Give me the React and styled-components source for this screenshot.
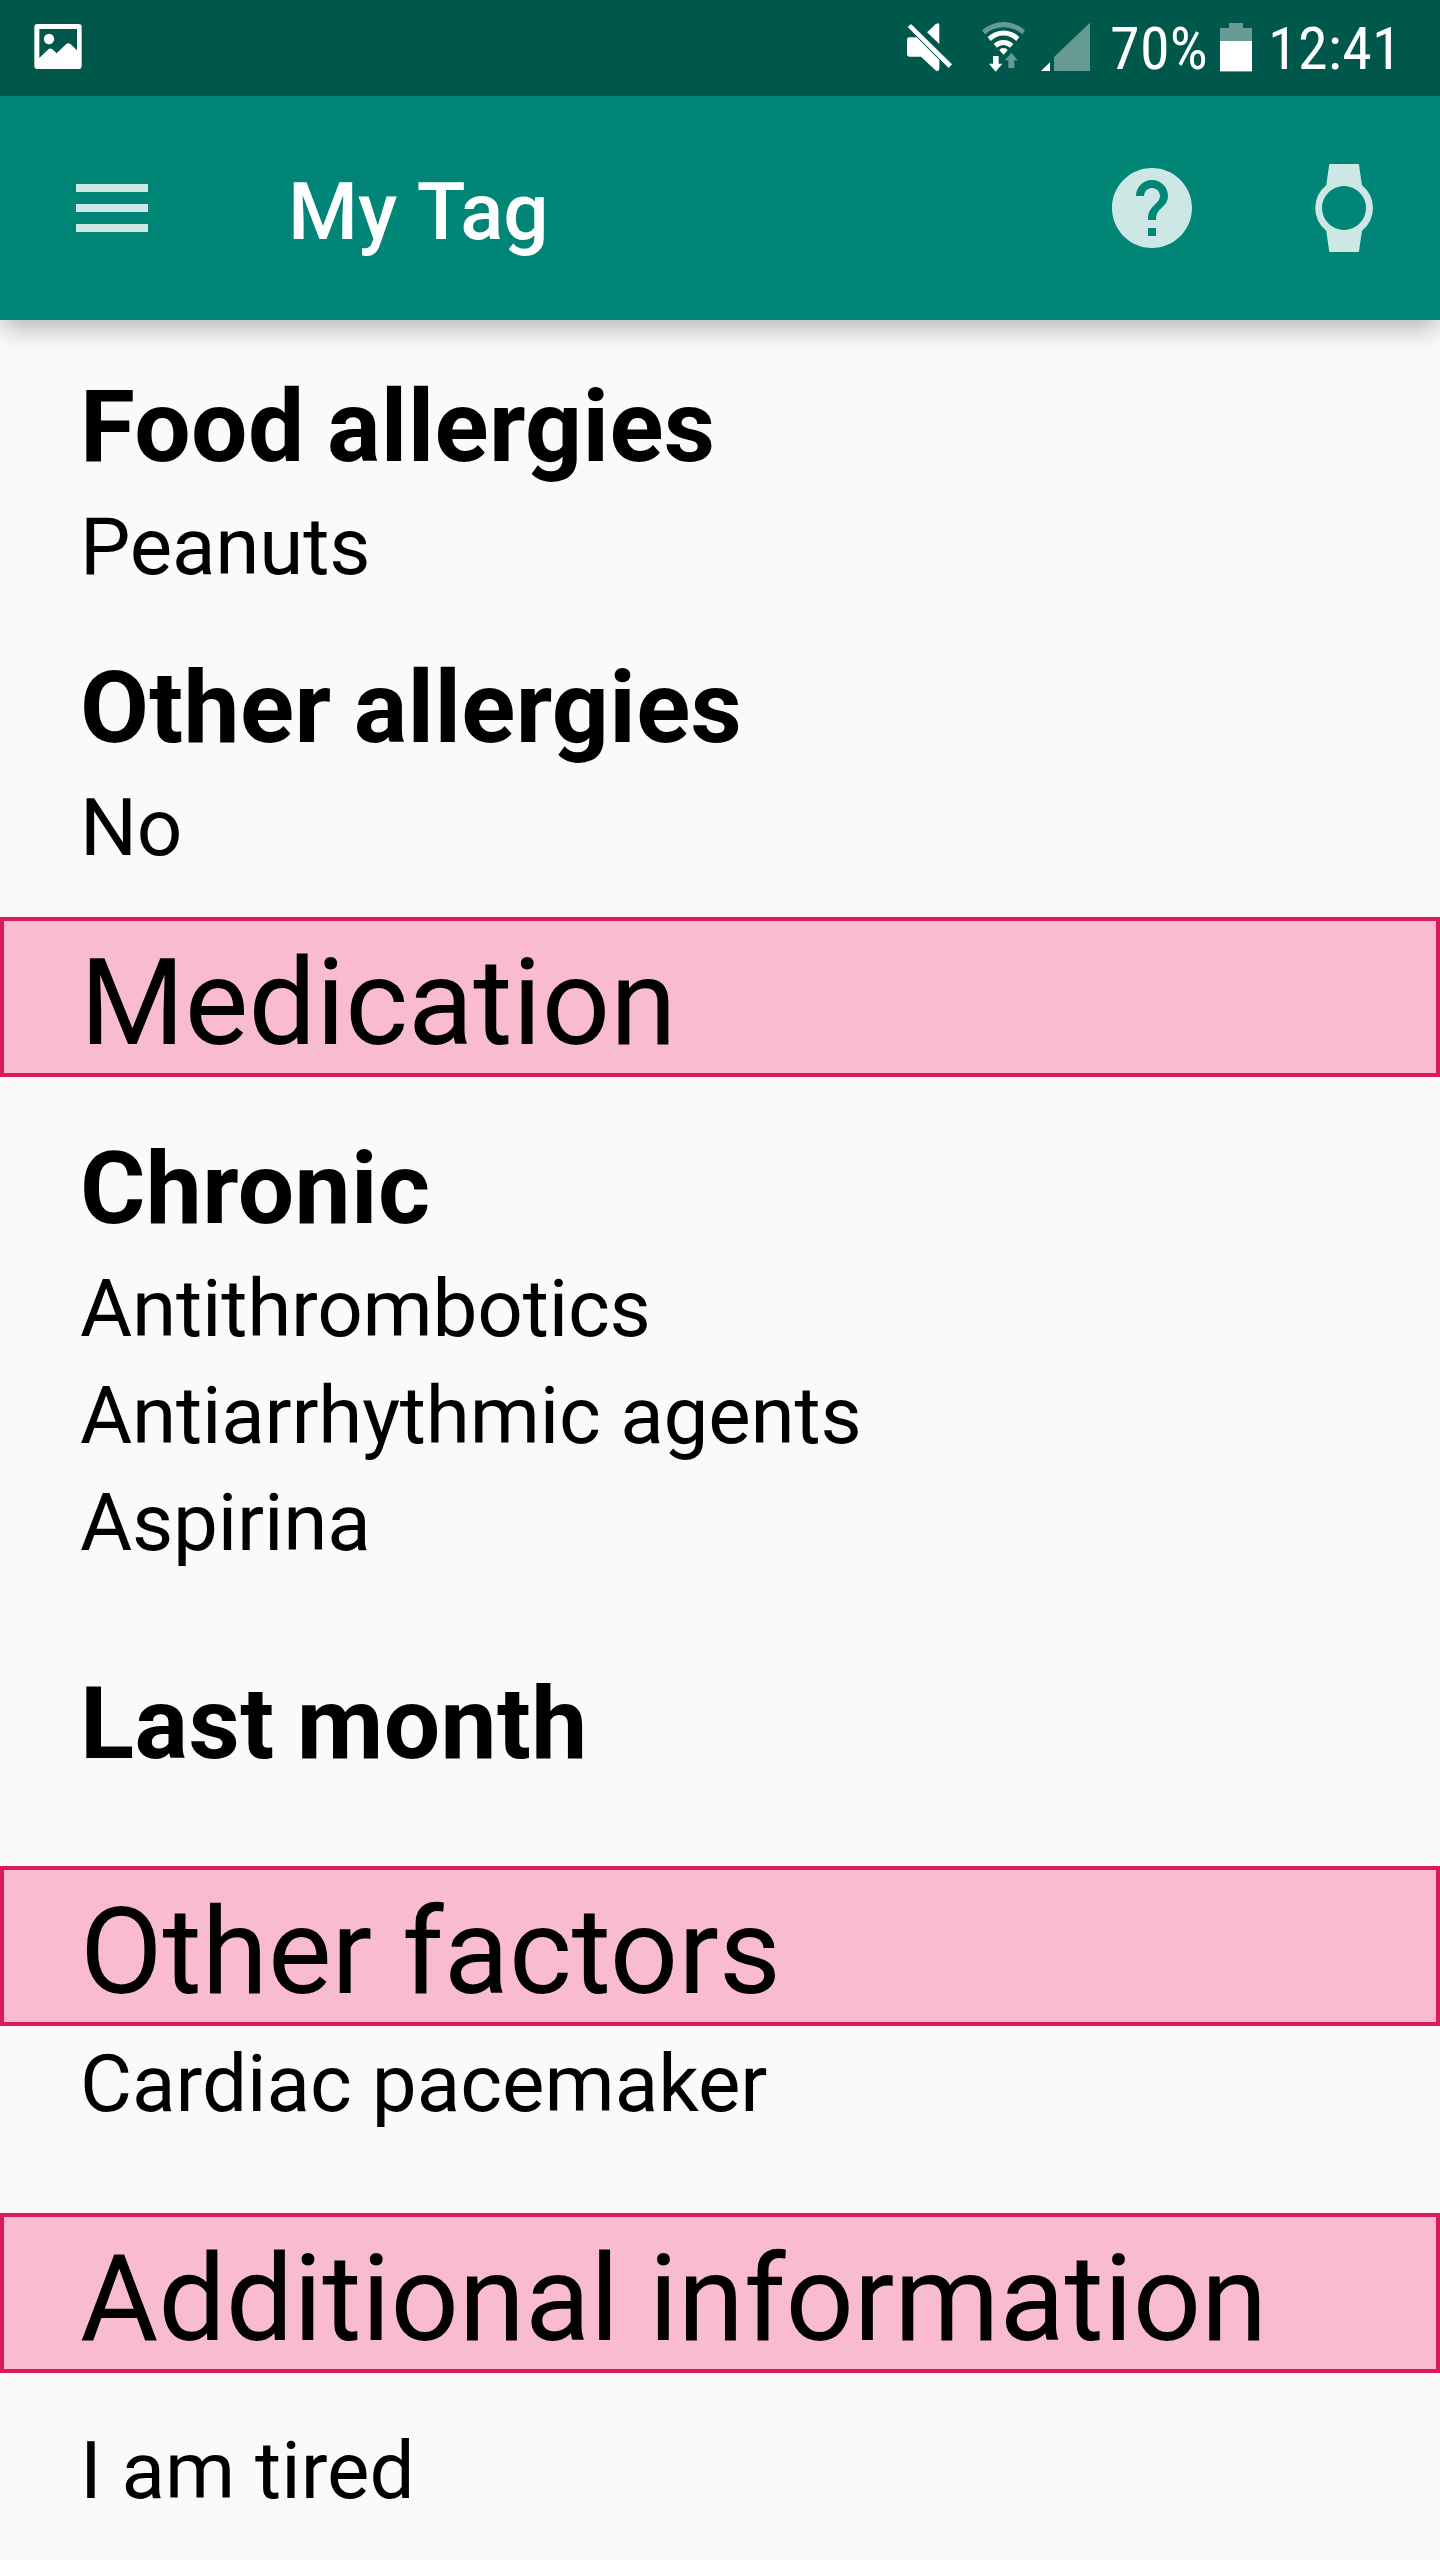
import React from "react";
import styled, { createGlobalStyle } from "styled-components";

const GlobalStyle = createGlobalStyle`
  *, *::before, *::after { box-sizing: border-box; }
  body { margin: 0; background: #fafafa; }
`;

const Screen = styled.div`
  display: flex;
  flex-direction: column;
  width: 1440px;
  height: 2560px;
  overflow: hidden;
  background: #fafafa;
  color: #000;
  font-family: Roboto, "Liberation Sans", sans-serif;
`;

const StatusBar = styled.header`
  display: flex;
  flex: none;
  justify-content: space-between;
  height: 96px;
  padding: 0 44px 0 33px;
  background: #00574b;
  color: #fff;
`;

const StatusGroup = styled.div`
  display: flex;
  align-items: flex-start;
`;

const StatusIcon = styled.svg`
  display: block;
  height: 96px;
  width: ${(p) => p.$width}px;
  margin-right: ${(p) => p.$gap || 0}px;
  fill: #fff;
`;

const StatusText = styled.span`
  width: ${(p) => p.$width}px;
  padding-top: 14px;
  font-family: "Roboto Condensed", Roboto, sans-serif;
  font-stretch: 75%;
  font-size: 60px;
  letter-spacing: 0.3px;
  line-height: 70px;
  white-space: nowrap;
`;

const AppBar = styled.nav`
  display: flex;
  flex: none;
  align-items: center;
  height: 224px;
  padding: 0 48px 0 64px;
  background: #008577;
  box-shadow: 0 12px 24px -3px rgba(0, 0, 0, 0.27);
`;

const Title = styled.h1`
  flex: 1;
  margin: 0 0 0 128px;
  padding-top: 7px;
  color: #fff;
  font-size: 80px;
  font-weight: 500;
  line-height: 94px;
  word-spacing: 1.5px;
`;

const IconButton = styled.button`
  display: block;
  width: 96px;
  height: 96px;
  margin: 0 0 0 ${(p) => p.$gap || 0}px;
  padding: 0;
  border: 0;
  background: none;
  color: rgba(255, 255, 255, 0.8);

  svg {
    display: block;
    width: 96px;
    height: 96px;
    fill: currentColor;
  }
`;

const Content = styled.main`
  display: flex;
  flex-direction: column;
`;

const Group = styled.section`
  display: flex;
  flex-direction: column;
  padding: ${(p) => p.$top}px 80px ${(p) => p.$bottom || 0}px;
`;

const GroupTitle = styled.h3`
  margin: 0;
  font-size: 100px;
  font-weight: 700;
  letter-spacing: 0.4px;
  line-height: 117px;
  word-spacing: -3px;
`;

const List = styled.ul`
  display: flex;
  flex-direction: column;
  gap: 13px;
  margin: ${(p) => p.$top || 0}px 0 0;
  padding: 0;
  list-style: none;
`;

const Item = styled.li`
  font-size: 80px;
  letter-spacing: ${(p) => p.$tracking}px;
  line-height: 94px;
`;

const SectionTitle = styled.h2`
  height: 160px;
  margin: 0;
  padding: 12px 76px 0;
  border: 4px solid #d81b60;
  background: #f8bbd0;
  font-size: 120px;
  font-weight: 400;
  letter-spacing: ${(p) => p.$tracking || 0}px;
  line-height: 140px;
`;

function Entry({ title, items, top, bottom }) {
  return (
    <Group $top={top} $bottom={bottom}>
      {title && <GroupTitle>{title}</GroupTitle>}
      {items && (
        <List $top={title ? 15 : 0}>
          {items.map((item) => (
            <Item key={item} $tracking={title ? -0.2 : 0}>
              {item}
            </Item>
          ))}
        </List>
      )}
    </Group>
  );
}

function PictureIcon() {
  return (
    <StatusIcon viewBox="99 0 150 288" $width={50}>
      <path
        fillRule="evenodd"
        d="M112 72H236Q245 72 245 81V198Q245 207 236 207H112Q103 207 103 198V81Q103 72 112 72ZM118 87V174L145 148Q151 143 157 148L170 160L198 133Q205 126 212 133L231 151V87Z"
      />
      <circle cx="147" cy="117" r="15.5" />
    </StatusIcon>
  );
}

function MuteIcon() {
  return (
    <StatusIcon viewBox="78 0 144 288" $width={48} $gap={27}>
      <path d="M88 112H110L178 180V206Q177 216 168 212L123 170H88Q81 170 81 163V119Q81 112 88 112Z" />
      <path d="M141 97L167 73Q178 65 178 76V132Z" />
      <path d="M83 81L93 72L216 193L206 204Z" />
    </StatusIcon>
  );
}

function WifiIcon() {
  return (
    <StatusIcon viewBox="303 0 135 288" $width={45} $gap={14}>
      <path
        opacity="0.4"
        d="M306 91A96 96 0 0 1 435 91L427 103A84 84 0 0 0 315 103Z"
      />
      <path d="M323 111A68 68 0 0 1 418 111L409 123A54 54 0 0 0 332 123Z" />
      <path d="M341 132A42 42 0 0 1 400 132L390 143A28 28 0 0 0 351 143Z" />
      <path d="M358 151Q361 144 370 144Q380 144 383 151L371 164Z" />
      <path d="M339 168H356V191H367L347 215L327 191H339Z" />
      <path opacity="0.4" d="M394 158L413 181H403V204H385V181H374Z" />
    </StatusIcon>
  );
}

function SignalIcon() {
  return (
    <StatusIcon viewBox="480 0 153 288" $width={51} $gap={19}>
      <path d="M483 213L510 187V213Z" />
      <path opacity="0.4" d="M522 213V171L630 68V213Z" />
    </StatusIcon>
  );
}

function BatteryIcon() {
  return (
    <StatusIcon viewBox="357 0 102 288" $width={34} $gap={15}>
      <path
        opacity="0.4"
        d="M387 69H429V84H456V123H360V84H387ZM360 213H456V216H360Z"
      />
      <path d="M360 123H456V213H360Z" />
    </StatusIcon>
  );
}

export default function App() {
  return (
    <>
      <GlobalStyle />
      <Screen>
        <StatusBar>
          <PictureIcon />
          <StatusGroup>
            <MuteIcon />
            <WifiIcon />
            <SignalIcon />
            <StatusText $width={109}>70%</StatusText>
            <BatteryIcon />
            <StatusText $width={128}>12:41</StatusText>
          </StatusGroup>
        </StatusBar>
        <AppBar>
          <IconButton aria-label="Menu">
            <svg viewBox="0 0 24 24">
              <path d="M3 18h18v-2H3v2zm0-5h18v-2H3v2zm0-7v2h18V6H3z" />
            </svg>
          </IconButton>
          <Title>My Tag</Title>
          <IconButton aria-label="Help">
            <svg viewBox="0 0 24 24">
              <path d="M12 2C6.48 2 2 6.48 2 12s4.48 10 10 10 10-4.48 10-10S17.52 2 12 2zm1 17h-2v-2h2v2zm2.07-7.75l-.9.92C13.45 12.9 13 13.5 13 15h-2v-.5c0-1.1.45-2.1 1.17-2.83l1.24-1.26c.37-.36.59-.86.59-1.41 0-1.1-.9-2-2-2s-2 .9-2 2H8c0-2.21 1.79-4 4-4s4 1.79 4 4c0 .88-.36 1.68-.93 2.25z" />
            </svg>
          </IconButton>
          <IconButton aria-label="Watch" $gap={96}>
            <svg viewBox="0 0 96 96">
              <path
                fillRule="evenodd"
                d="M33.3 4H62.9L66 25.2A29.1 29.1 0 0 1 66 70.8L62.9 92H33.3L30.2 70.8A29.1 29.1 0 0 1 30.2 25.2ZM48 26A22 22 0 1 0 48 70A22 22 0 1 0 48 26Z"
              />
            </svg>
          </IconButton>
        </AppBar>
        <Content>
          <Entry title="Food allergies" items={["Peanuts"]} top={48} />
          <Entry title="Other allergies" items={["No"]} top={55} bottom={42} />
          <SectionTitle>Medication</SectionTitle>
          <Entry
            title="Chronic"
            items={["Antithrombotics", "Antiarrhythmic agents", "Aspirina"]}
            top={53}
          />
          <Entry title="Last month" top={95} bottom={84} />
          <SectionTitle>Other factors</SectionTitle>
          <Entry items={["Cardiac pacemaker"]} top={11} bottom={82} />
          <SectionTitle $tracking={-0.13}>Additional information</SectionTitle>
          <Entry items={["I am tired"]} top={51} bottom={42} />
        </Content>
      </Screen>
    </>
  );
}
